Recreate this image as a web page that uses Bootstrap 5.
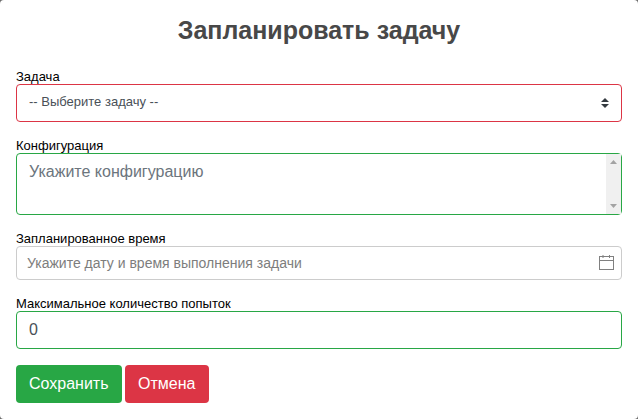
<!DOCTYPE html>
<html lang="ru">
<head>
<meta charset="utf-8">
<title>Запланировать задачу</title>
<link rel="stylesheet" href="https://cdn.jsdelivr.net/npm/bootstrap@5.3.0/dist/css/bootstrap.min.css">
<style>
html,body{height:100%;overflow:hidden}
body{background:#6b6b6b;font-family:"Liberation Sans",Arial,sans-serif}
.sheet{background:#fff;height:419px;border-radius:4px;padding:13px 16px 0}
.sheet-title{font-size:25px;line-height:34px;font-weight:700;color:#484848;text-align:center;margin:0 0 22px}
.field{margin-bottom:16px}
.field-label{display:block;font-size:13px;line-height:15px;color:#000;margin:0}
.sheet .form-select,.sheet .form-control{font-family:"Liberation Sans",Arial,sans-serif;border-radius:4px}
.sheet .form-select{height:38px;font-size:13px;color:#495057;border-color:#dc3545;padding:5px 36px 7px 12px;
  background-image:url("data:image/svg+xml,%3csvg xmlns='http://www.w3.org/2000/svg' viewBox='0 0 4 5'%3e%3cpath fill='%23343a40' d='M2 0L0 2h4zm0 5L0 3h4z'/%3e%3c/svg%3e");
  background-size:8px 10px;background-position:right 12px center}
.sheet textarea.form-control{height:62px;min-height:62px;font-size:16px;border-color:#28a745;resize:none;padding:6px 12px;display:block}
.sheet textarea.form-control::placeholder{color:#6c757d}
.fake-scroll{position:absolute;top:1px;right:1px;bottom:1px;width:15px;background:#f0f0f0;display:flex;flex-direction:column;justify-content:space-between;align-items:center;padding:6px 0;pointer-events:none}
.fake-scroll svg{display:block;width:7px;height:4px}
.sheet input.num-field{height:38px;font-size:16px;color:#495057;border-color:#28a745}
.sheet input.when-field{height:34px;font-size:14px;border-color:#ccc;padding:4px 30px 4px 10px}
.sheet input.when-field::placeholder{color:#7d7d7d}
.cal-icon{position:absolute;right:8px;top:9px;width:16px;height:16px;pointer-events:none}
.act-btn{font-size:16px;height:38px;border-radius:4px;padding:6px 13px;border:0;color:#fff}
.act-save{background:#28a745}
.act-cancel{background:#dc3545;padding:6px 13.5px}
.act-row{gap:3px}
</style>
</head>
<body>
<div class="sheet">
  <h1 class="sheet-title">Запланировать задачу</h1>
  <form>
    <div class="field">
      <label class="field-label" for="f1">Задача</label>
      <select class="form-select" id="f1"><option>-- Выберите задачу --</option></select>
    </div>
    <div class="field">
      <label class="field-label" for="f2">Конфигурация</label>
      <div class="position-relative">
        <textarea class="form-control" id="f2" placeholder="Укажите конфигурацию"></textarea>
        <div class="fake-scroll" aria-hidden="true">
          <svg viewBox="0 0 7 4"><path fill="#a3a3a3" d="M3.5 0L7 4H0z"/></svg>
          <svg viewBox="0 0 7 4"><path fill="#a3a3a3" d="M3.5 4L7 0H0z"/></svg>
        </div>
      </div>
    </div>
    <div class="field">
      <label class="field-label" for="f3">Запланированное время</label>
      <div class="position-relative">
        <input class="form-control when-field" id="f3" type="text" placeholder="Укажите дату и время выполнения задачи">
        <svg class="cal-icon" viewBox="0 0 16 16" fill="none" stroke="#808080" stroke-width="1">
          <rect x="1.5" y="1.5" width="14" height="13"/>
          <path d="M1.5 5.5h14M5 0v3M11.5 0v3"/>
        </svg>
      </div>
    </div>
    <div class="field">
      <label class="field-label" for="f4">Максимальное количество попыток</label>
      <input class="form-control num-field" id="f4" type="text" value="0">
    </div>
    <div class="d-flex act-row">
      <button type="button" class="btn act-btn act-save">Сохранить</button>
      <button type="button" class="btn act-btn act-cancel">Отмена</button>
    </div>
  </form>
</div>
<script src="https://cdn.jsdelivr.net/npm/bootstrap@5.3.0/dist/js/bootstrap.bundle.min.js"></script>
</body>
</html>
